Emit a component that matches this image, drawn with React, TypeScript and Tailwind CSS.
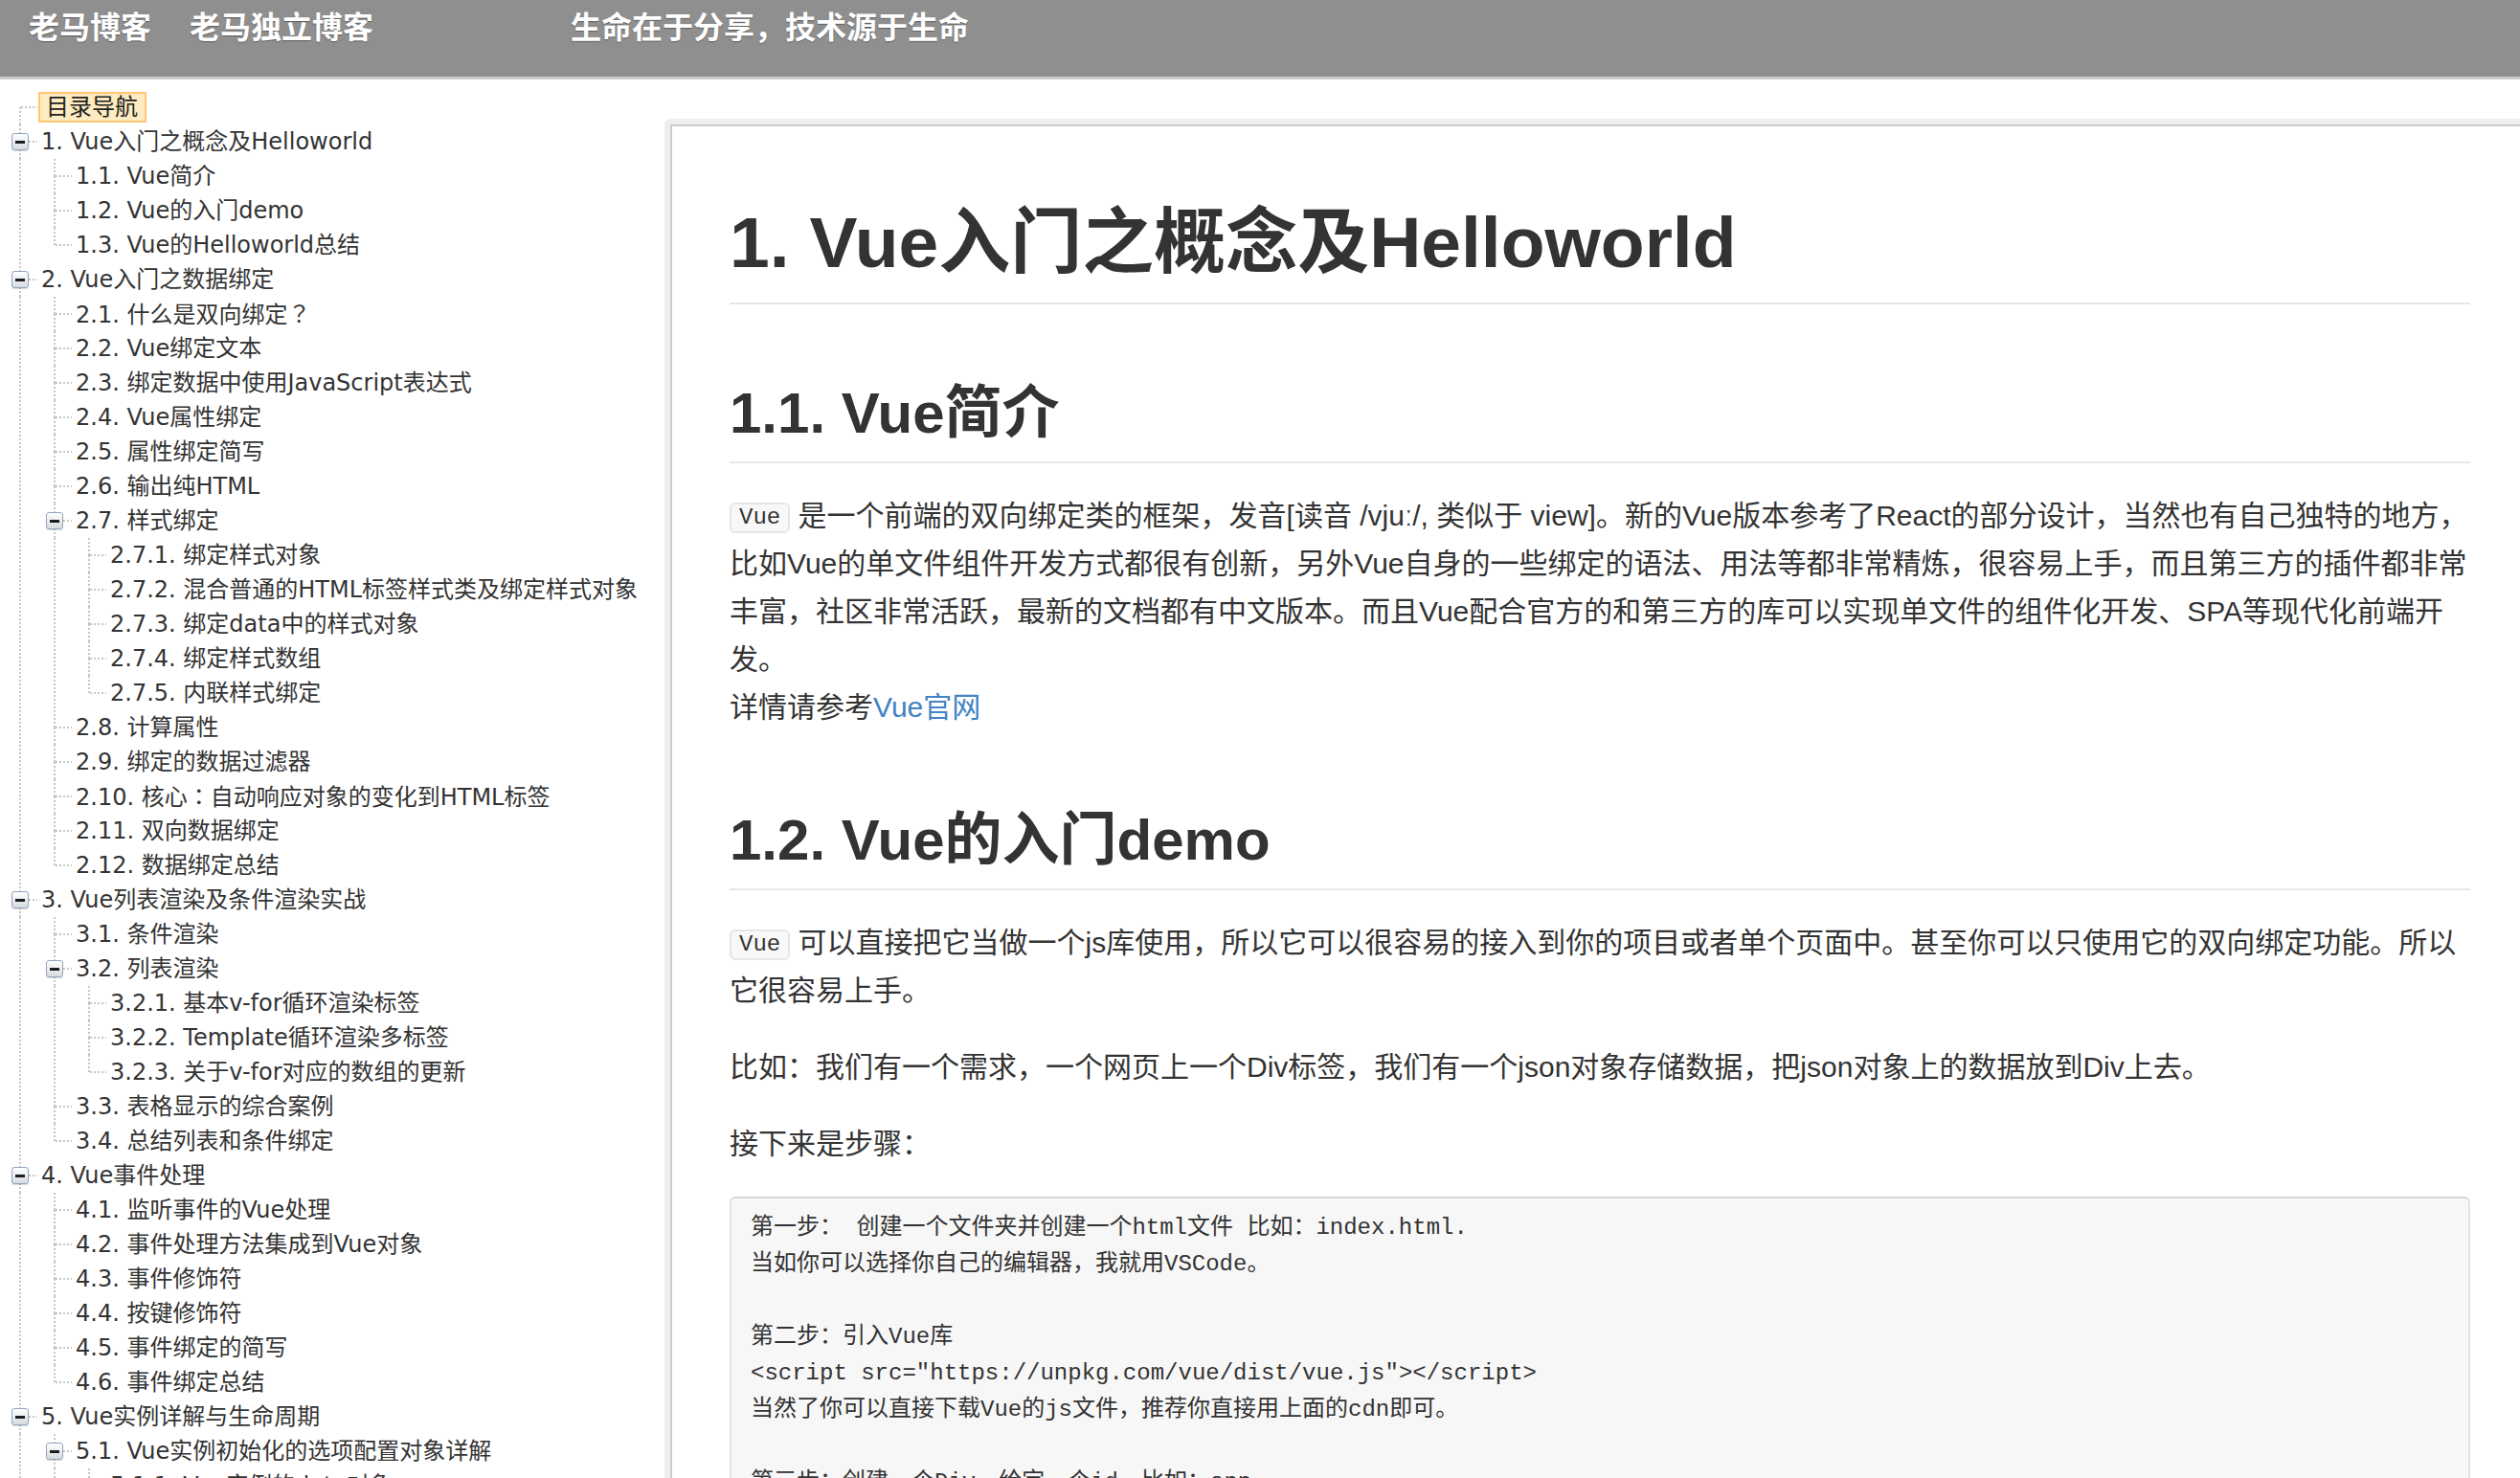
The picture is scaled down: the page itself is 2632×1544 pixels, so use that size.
import { Fragment } from "react";

type TocNode = {
  title: string;
  children?: TocNode[];
};

type TocRow = {
  title: string;
  guides: boolean[];
  hasTop: boolean;
  hasNext: boolean;
  isOpen: boolean;
  isSelected: boolean;
};

const tocTree: TocNode[] = [
  {
    title: "1. Vue入门之概念及Helloworld",
    children: [
      { title: "1.1. Vue简介" },
      { title: "1.2. Vue的入门demo" },
      { title: "1.3. Vue的Helloworld总结" },
    ],
  },
  {
    title: "2. Vue入门之数据绑定",
    children: [
      { title: "2.1. 什么是双向绑定？" },
      { title: "2.2. Vue绑定文本" },
      { title: "2.3. 绑定数据中使用JavaScript表达式" },
      { title: "2.4. Vue属性绑定" },
      { title: "2.5. 属性绑定简写" },
      { title: "2.6. 输出纯HTML" },
      {
        title: "2.7. 样式绑定",
        children: [
          { title: "2.7.1. 绑定样式对象" },
          { title: "2.7.2. 混合普通的HTML标签样式类及绑定样式对象" },
          { title: "2.7.3. 绑定data中的样式对象" },
          { title: "2.7.4. 绑定样式数组" },
          { title: "2.7.5. 内联样式绑定" },
        ],
      },
      { title: "2.8. 计算属性" },
      { title: "2.9. 绑定的数据过滤器" },
      { title: "2.10. 核心：自动响应对象的变化到HTML标签" },
      { title: "2.11. 双向数据绑定" },
      { title: "2.12. 数据绑定总结" },
    ],
  },
  {
    title: "3. Vue列表渲染及条件渲染实战",
    children: [
      { title: "3.1. 条件渲染" },
      {
        title: "3.2. 列表渲染",
        children: [
          { title: "3.2.1. 基本v-for循环渲染标签" },
          { title: "3.2.2. Template循环渲染多标签" },
          { title: "3.2.3. 关于v-for对应的数组的更新" },
        ],
      },
      { title: "3.3. 表格显示的综合案例" },
      { title: "3.4. 总结列表和条件绑定" },
    ],
  },
  {
    title: "4. Vue事件处理",
    children: [
      { title: "4.1. 监听事件的Vue处理" },
      { title: "4.2. 事件处理方法集成到Vue对象" },
      { title: "4.3. 事件修饰符" },
      { title: "4.4. 按键修饰符" },
      { title: "4.5. 事件绑定的简写" },
      { title: "4.6. 事件绑定总结" },
    ],
  },
  {
    title: "5. Vue实例详解与生命周期",
    children: [
      {
        title: "5.1. Vue实例初始化的选项配置对象详解",
        children: [
          { title: "5.1.1. Vue实例的data对象" },
          { title: "5.1.2. Vue实例的computed" },
        ],
      },
      { title: "5.2. Vue实例的生命周期" },
    ],
  },
  { title: "6. Vue组件" },
];

function flattenToc(nodes: TocNode[], guides: boolean[], rows: TocRow[]) {
  nodes.forEach((node, index) => {
    const hasNext = index < nodes.length - 1;
    const isOpen = Boolean(node.children?.length);

    rows.push({ title: node.title, guides, hasTop: true, hasNext, isOpen, isSelected: false });

    if (node.children) {
      flattenToc(node.children, [...guides, hasNext], rows);
    }
  });

  return rows;
}

const tocRows: TocRow[] = flattenToc(tocTree, [], [
  { title: "目录导航", guides: [], hasTop: false, hasNext: true, isOpen: false, isSelected: true },
]);

const dotsDown = "bg-[image:repeating-linear-gradient(to_bottom,#c6c6c6_0_2px,transparent_2px_4px)]";
const dotsRight = "bg-[image:repeating-linear-gradient(to_right,#c6c6c6_0_2px,transparent_2px_4px)]";

// the tree shows centred full-width ？ and ：, which DejaVu and the SC face do not draw
function TocTitle({ text }: { text: string }) {
  return (
    <>
      {text.split(/([？：])/).map((part, index) =>
        part === "？" || part === "：" ? (
          <span key={index} className="font-['Noto_Sans_CJK_JP',sans-serif]">
            {part}
          </span>
        ) : (
          <Fragment key={index}>{part}</Fragment>
        ),
      )}
    </>
  );
}

function MinusButton() {
  return (
    <span className="absolute left-[9px] top-[9px] flex h-[18px] w-[18px] items-center justify-center rounded-[3px] border border-[#92a6bf] bg-[linear-gradient(#ffffff,#d6dbe1)] shadow-[0_1px_1px_rgba(0,0,0,0.15)]">
      <span className="h-[3px] w-[10px] bg-[#1c1c1c]" />
    </span>
  );
}

function GuideCell({ line }: { line: boolean }) {
  return (
    <span className="relative h-9 w-9 shrink-0">
      {line ? <span className={`absolute left-[17px] top-0 h-9 w-[2px] ${dotsDown}`} /> : null}
    </span>
  );
}

function SwitchCell({ row }: { row: TocRow }) {
  return (
    <span className="relative h-9 w-9 shrink-0">
      {row.hasTop ? <span className={`absolute left-[17px] top-0 h-[18px] w-[2px] ${dotsDown}`} /> : null}
      {row.hasNext ? <span className={`absolute left-[17px] top-[18px] h-[18px] w-[2px] ${dotsDown}`} /> : null}
      <span className={`absolute left-[19px] top-[17px] h-[2px] w-[17px] ${dotsRight}`} />
      {row.isOpen ? <MinusButton /> : null}
    </span>
  );
}

function TocTree() {
  return (
    <nav className="w-[694px] shrink-0 pl-[3px] pt-[11px] font-['DejaVu_Sans','Noto_Sans_CJK_SC',sans-serif] text-[24px] text-[#333333]">
      {tocRows.map((row) => (
        <div key={row.title} className="flex h-9 items-center">
          {row.guides.map((line, level) => (
            <GuideCell key={level} line={line} />
          ))}
          <SwitchCell row={row} />
          {row.isSelected ? (
            <span className="ml-[1px] h-8 border-2 border-[#ffc774] bg-[#ffebc0] pl-[6px] pr-[7px] leading-[28px] text-[#222222]">
              {row.title}
            </span>
          ) : (
            <span className="whitespace-nowrap pl-[4px] leading-9">
              <TocTitle text={row.title} />
            </span>
          )}
        </div>
      ))}
    </nav>
  );
}

function InlineCode({ children }: { children: string }) {
  return (
    <code className="inline-block rounded-[6px] border-2 border-[#e6e6e6] bg-[#f8f8f8] px-[8px] align-middle font-['Liberation_Mono','Noto_Sans_CJK_SC',monospace] text-[24px] leading-[28px] text-[#333333]">
      {children}
    </code>
  );
}

const codeLines = [
  "第一步： 创建一个文件夹并创建一个html文件 比如：index.html.",
  "当如你可以选择你自己的编辑器，我就用VSCode。",
  "",
  "第二步：引入Vue库",
  '<script src="https://unpkg.com/vue/dist/vue.js"></script>',
  "当然了你可以直接下载Vue的js文件，推荐你直接用上面的cdn即可。",
  "",
  "第三步：创建一个Div，给定一个id，比如：app",
  '<div id="app"></div>',
];

function Article() {
  return (
    <main className="mt-[41px] flex-1 rounded-tl-[6px] bg-[#eeeeee] pl-[6px] pt-[6px]">
      <div className="h-full border-l-2 border-t-2 border-[#cccccc] bg-white pl-[60px] pr-[52px] pt-[77px] font-['Liberation_Sans','Noto_Sans_CJK_SC',sans-serif] text-[30px] leading-[50px] text-[#333333]">
        <h1 className="border-b-2 border-[#e5e5e5] pb-[18px] text-[75px] font-bold leading-[89px]">
          1. Vue入门之概念及Helloworld
        </h1>

        <h2 className="mb-[30px] mt-[78px] border-b-2 border-[#e8e8e8] pb-[15px] text-[60px] font-bold leading-[71px]">
          1.1. Vue简介
        </h2>
        <p className="mb-[30px]">
          <InlineCode>Vue</InlineCode> 是一个前端的双向绑定类的框架，发音[读音 /vjuː/, 类似于 view]。新的Vue版本参考了React的部分设计，当然也有自己独特的地方，比如Vue的单文件组件开发方式都很有创新，另外Vue自身的一些绑定的语法、用法等都非常精炼，很容易上手，而且第三方的插件都非常丰富，社区非常活跃，最新的文档都有中文版本。而且Vue配合官方的和第三方的库可以实现单文件的组件化开发、SPA等现代化前端开发。
          <br />
          详情请参考<a className="text-[#4183c4]">Vue官网</a>
        </p>

        <h2 className="mb-[30px] mt-[78px] border-b-2 border-[#e8e8e8] pb-[15px] text-[60px] font-bold leading-[71px]">
          1.2. Vue的入门demo
        </h2>
        <p className="mb-[30px]">
          <InlineCode>Vue</InlineCode> 可以直接把它当做一个js库使用，所以它可以很容易的接入到你的项目或者单个页面中。甚至你可以只使用它的双向绑定功能。所以它很容易上手。
        </p>
        <p className="mb-[30px]">比如：我们有一个需求，一个网页上一个Div标签，我们有一个json对象存储数据，把json对象上的数据放到Div上去。</p>
        <p className="mb-[30px]">接下来是步骤：</p>

        <pre className="rounded-[6px] border-2 border-[#e2e2e2] border-t-[#d6d6d6] bg-[#f7f7f7] pb-[12px] pl-[20px] pr-[20px] pt-[12px] font-['Liberation_Mono','Noto_Sans_CJK_SC',monospace] text-[24px] leading-[38px] text-[#333333]">
          {codeLines.map((line, index) => (
            <Fragment key={index}>
              {line}
              {"\n"}
            </Fragment>
          ))}
        </pre>
      </div>
    </main>
  );
}

export default function App() {
  return (
    <div className="h-[1544px] overflow-hidden bg-white">
      <header className="flex h-[83px] border-b-[3px] border-[#cccccc] bg-[#8f8f8f] pl-[30px] pt-[4px] font-['Noto_Sans_CJK_SC',sans-serif] text-[32px] font-bold leading-[44px] text-white [text-shadow:0_1px_1px_rgba(0,0,0,0.35)]">
        <span>老马博客</span>
        <span className="ml-[40px]">老马独立博客</span>
        <span className="ml-[206px]">生命在于分享，技术源于生命</span>
      </header>

      <div className="flex h-[1461px]">
        <TocTree />
        <Article />
      </div>
    </div>
  );
}
